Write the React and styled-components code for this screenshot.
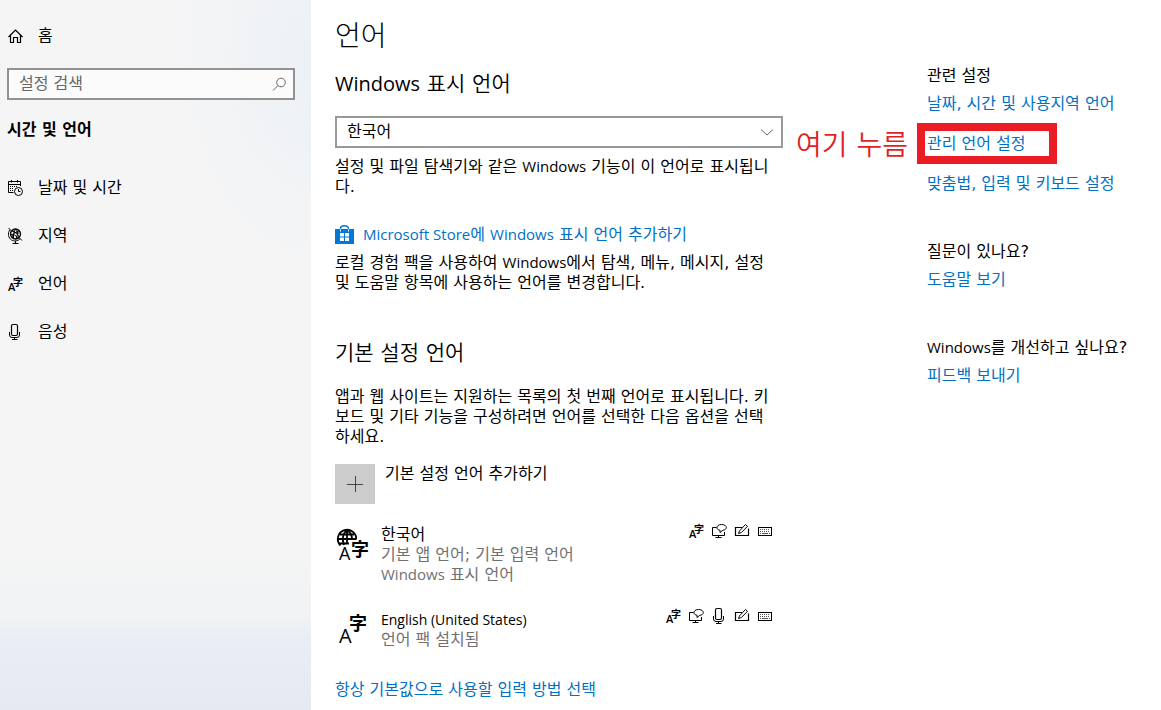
import React from "react";
import styled, { createGlobalStyle } from "styled-components";

const GlobalStyle = createGlobalStyle`
  *, *::before, *::after { box-sizing: border-box; }
  body {
    margin: 0;
    background: #fff;
    color: #000;
    font-family: "DejaVu Sans", "Noto Sans CJK KR", sans-serif;
    font-size: 16px;
    font-weight: 400;
    line-height: 20px;
  }
  h1, h2, h3, p, ul { margin: 0; padding: 0; font-weight: inherit; }
  ul { list-style: none; }
  button, input, select { font: inherit; color: inherit; }
`;

const latinSizes = { name: "14px", body: "15px", title: "20px" };

const Latin = styled.span`
  font-family: "Open Sans", "Noto Sans CJK KR", sans-serif;
  font-size: ${(p) => latinSizes[p.$size || "body"]};
  font-weight: 400;
  line-height: 1;
`;

const Page = styled.div`
  display: flex;
  min-height: 100vh;
`;

const Sidebar = styled.aside`
  flex: 0 0 311px;
  padding: 20px 16px 20px 7px;
  background:
    radial-gradient(ellipse 140px 220px at 100% 60px, #ecf1f5 0%, rgba(236, 241, 245, 0) 100%),
    linear-gradient(#f5f5f6 0, #f5f5f5 77%, #f0f2f4 87%, #e9edf6 90%, #e5e9f2 100%);
`;

const NavLink = styled.a`
  display: flex;
  align-items: center;
  gap: 15px;
  height: ${(p) => (p.$home ? "32px" : "48px")};
  color: #000;
  text-decoration: none;
  svg { flex: none; }
`;

const SearchBox = styled.label`
  display: flex;
  align-items: center;
  height: 32px;
  margin-top: 16px;
  padding: 0 6px 0 10px;
  border: 2px solid #929292;
  background: #fbfbfc;
`;

const SearchInput = styled.input`
  flex: 1;
  min-width: 0;
  padding: 0;
  border: 0;
  outline: 0;
  background: none;
  &::placeholder { color: #666; opacity: 1; }
`;

const SidebarTitle = styled.h2`
  margin: 20px 0 24px;
  font-size: 16px;
  font-weight: 700;
`;

const Main = styled.main`
  flex: 1;
  display: flex;
  align-items: flex-start;
  gap: 144px;
  min-width: 0;
  padding: 16px 24px 10px;
`;

const Content = styled.div`
  flex: 0 0 448px;
`;

const PageTitle = styled.h1`
  font-size: 28px;
  font-weight: 300;
  line-height: 42px;
`;

const SectionTitle = styled.h2`
  margin-top: ${(p) => p.$top};
  font-size: 21px;
  font-weight: 350;
  line-height: 28px;
`;

const SelectWrap = styled.label`
  position: relative;
  display: block;
  margin: 18px 0 9px;
  svg {
    position: absolute;
    right: 8px;
    top: 8px;
    pointer-events: none;
  }
`;

const Select = styled.select`
  display: block;
  width: 100%;
  height: 32px;
  padding: 0 32px 0 10px;
  border: 2px solid #999;
  border-radius: 0;
  background: #fff;
  appearance: none;
`;

const Text = styled.p`
  margin-top: ${(p) => p.$top || "0"};
  white-space: nowrap;
`;

const Link = styled.a`
  color: #0071c5;
  text-decoration: none;
  white-space: nowrap;
`;

const StoreLink = styled(Link)`
  display: flex;
  align-items: center;
  gap: 9px;
  margin: 28px 0 8px;
`;

const AddButton = styled.button`
  display: flex;
  gap: 10px;
  margin: 17px 0 21px;
  padding: 0;
  border: 0;
  background: none;
  text-align: left;
`;

const PlusTile = styled.span`
  display: grid;
  place-items: center;
  width: 40px;
  height: 40px;
  background: #ccc;
`;

const LanguageList = styled.ul`
  display: grid;
  gap: 25px;
  margin-bottom: 30px;
`;

const LanguageItem = styled.li`
  display: flex;
  align-items: flex-start;
  gap: 10px;
  padding-right: 10px;
`;

const LanguageText = styled.div`
  flex: 1;
  color: #717171;
`;

const LanguageName = styled.h3`
  color: #000;
  font-size: 16px;
`;

const Features = styled.div`
  display: flex;
  gap: 7px;
  margin-top: -2px;
`;

const Related = styled.aside`
  display: grid;
  gap: 48px;
  padding-top: 50px;
`;

const RelatedGroup = styled.section`
  display: grid;
  justify-items: start;
  gap: 20px;
`;

const RelatedTitle = styled.h2`
  margin-bottom: -12px;
  font-size: 16px;
  white-space: nowrap;
`;

const Marked = styled.div`
  position: relative;
  &::after {
    content: "";
    position: absolute;
    inset: -11px -31px -10px -10px;
    border: 8px solid #ec1c24;
    pointer-events: none;
  }
`;

const MarkNote = styled.span`
  position: absolute;
  right: 100%;
  bottom: -10px;
  margin-right: 19px;
  color: #e01f26;
  font-size: 28px;
  font-weight: 350;
  line-height: 36px;
  white-space: nowrap;
`;

const Glyph = styled.text`
  font-family: ${(p) => (p.$latin ? '"Open Sans"' : '"Noto Sans CJK KR"')}, sans-serif;
  font-weight: ${(p) => p.$weight || 400};
`;

const Drawing = styled.svg`
  display: block;
  flex: none;
  overflow: visible;
`;

const Svg = ({ size = 16, children }) => (
  <Drawing width={size} height={size} viewBox={`0 0 ${size} ${size}`} fill="none" stroke="currentColor" strokeWidth="1" aria-hidden="true">
    {children}
  </Drawing>
);

const HomeIcon = () => (
  <Svg>
    <path d="M1.5 9 L8.5 2 L15.5 9 M3.5 7.5 V14.5 H6.5 V9.5 H10.5 V14.5 H13.5 V7.5" strokeWidth="1.2" />
  </Svg>
);

const SearchIcon = () => (
  <Svg>
    <circle cx="10" cy="6.5" r="4.3" stroke="#666" />
    <path d="M7 9.5 L2 14.5" stroke="#666" />
  </Svg>
);

const CalendarIcon = () => (
  <Svg>
    <path d="M6.5 12.5 H1.5 V1.5 H13.5 V6 M1.5 4.5 H13.5 M4.5 0 V2.5 M10.5 0 V2.5" />
    <path d="M3 6.5 H10 M3 8.5 H7 M3 10.5 H6" strokeDasharray="1 1" />
    <circle cx="11.5" cy="11.5" r="4" />
    <path d="M11.5 9 V11.5 H13.5" />
  </Svg>
);

const RegionIcon = () => (
  <Svg>
    <circle cx="8.5" cy="6" r="5" strokeWidth="1.3" />
    <path d="M5 3 C8 3.5 11.5 6 12.2 9.5 M12 3 C9 3.5 5.5 6 4.8 9.5 M5.5 2.5 Q8.5 6 12 5 M4 6.5 Q7 5.5 11.5 10 M8.5 1 Q5.5 5 6.5 10.5 M9.5 1 Q12 5 9 11" />
    <path d="M1.5 0 L4.5 3 M2.7 2 C.5 5.5 1.3 10 4.5 12 C7.5 13.8 11 13 13 10.8 M12 9.5 L15 12.5 M8.5 13 V15 M5.5 15.5 H11.5" />
  </Svg>
);

const LanguageIcon = () => (
  <Svg>
    <g fill="currentColor" stroke="none">
      <Glyph $latin x="1" y="15" fontSize="11" $weight={600}>A</Glyph>
      <Glyph x="6" y="10" fontSize="10" $weight={700}>字</Glyph>
    </g>
  </Svg>
);

const MicIcon = () => (
  <Svg>
    <rect x="4.5" y=".5" width="6" height="11" rx="1.5" strokeWidth="1.2" />
    <path d="M2.5 8 V11 Q2.5 13.5 5 13.5 H10 Q12.5 13.5 12.5 11 V8 M7.5 13.5 V15.5 M5 15.5 H10.5" />
  </Svg>
);

const DisplayIcon = () => (
  <Svg>
    <path d="M5.5 4.5 H1.5 V12.5 H13.5 V9 M4.5 14.5 H10.5 M7.5 12.5 V14.5" />
    <path d="M8 7 C4.5 6 5.5 1.5 10.5 1.5 C16.5 1.5 16.8 6.8 11.8 7.3 L9 9.5 V7.3 Z" />
  </Svg>
);

const PenIcon = () => (
  <Svg>
    <path d="M8 4.5 H1.5 V12.5 H14.5 V5.5" strokeWidth="1.2" />
    <path d="M4.5 10.5 L5.5 7.8 L11.5 1.5 L13.5 3.3 L7.3 9.6 Z" />
  </Svg>
);

const KeyboardIcon = () => (
  <Svg>
    <rect x="1.5" y="4.5" width="13" height="8" />
    <path d="M3 6.5 H13 M3 8.5 H13" strokeDasharray="1 1" stroke="#555" />
    <path d="M3 10.5 H4 M5 10.5 H11 M12 10.5 H13" stroke="#555" />
  </Svg>
);

const ChevronIcon = () => (
  <Svg>
    <path d="M2 5.5 L8 11 L14 5.5" stroke="#666" />
  </Svg>
);

const StoreIcon = () => (
  <Drawing width="19" height="20" viewBox="0 0 19 20" aria-hidden="true">
    <path d="M0 4 H19 V19 H0 Z" fill="#0078d7" />
    <path d="M5.5 7 V3.5 Q5.5 .7 9.5 .7 Q13.5 .7 13.5 3.5 V7" fill="none" stroke="#0078d7" strokeWidth="1.4" />
    <path d="M5.5 4.2 V6.5 M13.5 4.2 V6.5" stroke="#fff" strokeWidth="1" />
    <path d="M5 8 H9 V11.5 H5 Z M10 8 H14 V11.5 H10 Z M5 12.5 H9 V16 H5 Z M10 12.5 H14 V16 H10 Z" fill="#fff" />
  </Drawing>
);

const PlusIcon = () => (
  <Svg>
    <path d="M0 8.5 H16 M8.5 0 V16" stroke="#444" />
  </Svg>
);

const LanguagePackIcon = ({ globe }) => (
  <Svg size={36}>
    {globe && (
      <g strokeWidth="1.8">
        <path d="M5.5 20.5 A9.2 9.2 0 1 1 21.2 14.5 M3 14 H21 M4.5 18.5 H14 M5 9.5 H19" />
        <path d="M9 20 C6.5 14 8 8 12 5 C16 8 17.5 11 17 15 M12 5 V18" />
      </g>
    )}
    <g fill="currentColor" stroke="none">
      <Glyph $latin x="4" y={globe ? 35 : 33} fontSize={globe ? 18 : 20} $weight={500}>A</Glyph>
      <Glyph x={globe ? 16 : 14} y={globe ? 31 : 20} fontSize="18" $weight={700}>字</Glyph>
    </g>
  </Svg>
);

const navItems = [
  { label: "날짜 및 시간", Icon: CalendarIcon },
  { label: "지역", Icon: RegionIcon },
  { label: "언어", Icon: LanguageIcon },
  { label: "음성", Icon: MicIcon },
];

const languages = [
  {
    id: "ko",
    name: "한국어",
    globe: true,
    details: ["기본 앱 언어; 기본 입력 언어", <><Latin>Windows</Latin> 표시 언어</>],
    features: [LanguageIcon, DisplayIcon, PenIcon, KeyboardIcon],
  },
  {
    id: "en",
    name: <Latin $size="name">English (United States)</Latin>,
    details: ["언어 팩 설치됨"],
    features: [LanguageIcon, DisplayIcon, MicIcon, PenIcon, KeyboardIcon],
  },
];

export default function App() {
  return (
    <Page lang="ko">
      <GlobalStyle />
      <Sidebar>
        <NavLink href="#home" $home><HomeIcon />홈</NavLink>
        <SearchBox>
          <SearchInput type="text" placeholder="설정 검색" aria-label="설정 검색" />
          <SearchIcon />
        </SearchBox>
        <SidebarTitle>시간 및 언어</SidebarTitle>
        <nav>
          {navItems.map(({ label, Icon }) => (
            <NavLink href="#" key={label}><Icon />{label}</NavLink>
          ))}
        </nav>
      </Sidebar>
      <Main>
        <Content>
          <PageTitle>언어</PageTitle>
          <SectionTitle $top="12px"><Latin $size="title">Windows</Latin> 표시 언어</SectionTitle>
          <SelectWrap>
            <Select aria-label="Windows 표시 언어" defaultValue="ko">
              <option value="ko">한국어</option>
            </Select>
            <ChevronIcon />
          </SelectWrap>
          <Text>
            설정 및 파일 탐색기와 같은 <Latin>Windows</Latin> 기능이 이 언어로 표시됩니<br />다.
          </Text>
          <StoreLink href="#store">
            <StoreIcon />
            <span><Latin>Microsoft Store</Latin>에 <Latin>Windows</Latin> 표시 언어 추가하기</span>
          </StoreLink>
          <Text>
            로컬 경험 팩을 사용하여 <Latin>Windows</Latin>에서 탐색, 메뉴, 메시지, 설정<br />
            및 도움말 항목에 사용하는 언어를 변경합니다.
          </Text>
          <SectionTitle $top="46px">기본 설정 언어</SectionTitle>
          <Text $top="20px">
            앱과 웹 사이트는 지원하는 목록의 첫 번째 언어로 표시됩니다. 키<br />
            보드 및 기타 기능을 구성하려면 언어를 선택한 다음 옵션을 선택<br />
            하세요.
          </Text>
          <AddButton type="button">
            <PlusTile><PlusIcon /></PlusTile>
            기본 설정 언어 추가하기
          </AddButton>
          <LanguageList>
            {languages.map((lang) => (
              <LanguageItem key={lang.id}>
                <LanguagePackIcon globe={lang.globe} />
                <LanguageText>
                  <LanguageName>{lang.name}</LanguageName>
                  {lang.details.map((line, j) => <p key={j}>{line}</p>)}
                </LanguageText>
                <Features>
                  {lang.features.map((Icon, j) => <Icon key={j} />)}
                </Features>
              </LanguageItem>
            ))}
          </LanguageList>
          <Link href="#input">항상 기본값으로 사용할 입력 방법 선택</Link>
        </Content>
        <Related>
          <RelatedGroup>
            <RelatedTitle>관련 설정</RelatedTitle>
            <Link href="#date">날짜, 시간 및 사용지역 언어</Link>
            <Marked>
              <MarkNote>여기 누름</MarkNote>
              <Link href="#admin">관리 언어 설정</Link>
            </Marked>
            <Link href="#spelling">맞춤법, 입력 및 키보드 설정</Link>
          </RelatedGroup>
          <RelatedGroup>
            <RelatedTitle>질문이 있나요?</RelatedTitle>
            <Link href="#help">도움말 보기</Link>
          </RelatedGroup>
          <RelatedGroup>
            <RelatedTitle><Latin>Windows</Latin>를 개선하고 싶나요?</RelatedTitle>
            <Link href="#feedback">피드백 보내기</Link>
          </RelatedGroup>
        </Related>
      </Main>
    </Page>
  );
}
